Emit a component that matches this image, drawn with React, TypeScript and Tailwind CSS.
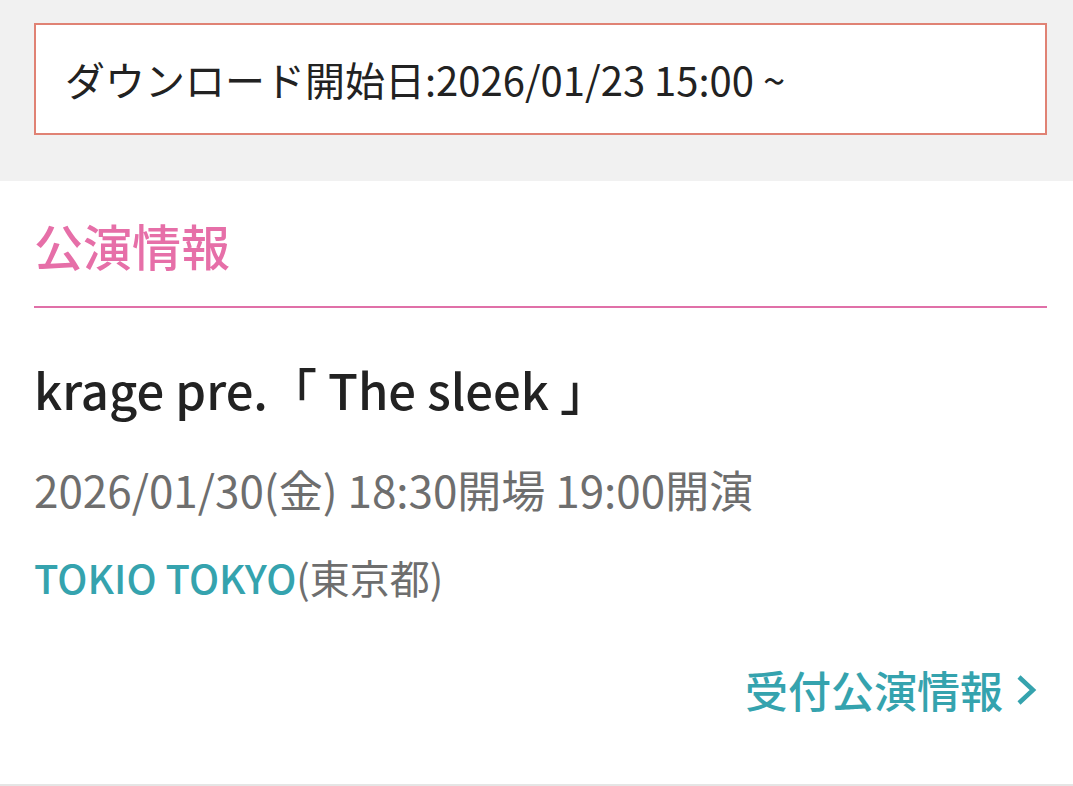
import React from "react";

const font = { fontFamily: '"Noto Sans CJK JP", "Noto Sans", sans-serif' };

export default function App() {
  return (
    <div className="w-[1073px] h-[786px] bg-white overflow-hidden flex flex-col" style={font}>
      {/* Download notice */}
      <div className="bg-[#f1f1f1] pl-[34px] pr-[26px] pt-[23px] pb-[46px]">
        <div className="h-[112px] border-2 border-[#e08274] bg-white flex items-center pl-[29px] text-[40px] leading-none text-[#222]">
          ダウンロード開始日:2026/01/23 15:00 ~
        </div>
      </div>

      {/* Performance info */}
      <div className="flex-1 pl-[34px] pr-[26px] flex flex-col">
        <h2 className="pt-[35px] pb-[31px] text-[49px] leading-[1.2] font-medium text-[#e66fa8] border-b-2 border-[#e070a8]">
          公演情報
        </h2>
        <div className="pt-[52px] text-[49px] leading-[1.2] font-medium text-[#222]">
          krage pre.「 The sleek 」
        </div>
        <div className="pt-[44px] text-[44px] leading-[1.2] text-[#6e6e6e]">
          2026/01/30(金) 18:30開場 19:00開演
        </div>
        <div className="pt-[38px] text-[40px] leading-[1.2] text-[#6e6e6e]">
          <span className="font-medium text-[#35a3ae]">TOKIO TOKYO</span>(東京都)
        </div>
        <div className="pt-[63px] flex justify-end items-center gap-[13px] pr-[9px] text-[43px] leading-[1.2] font-medium text-[#35a3ae]">
          <span>受付公演情報</span>
          <svg width="22" height="32" viewBox="0 0 22 32" fill="none">
            <path d="M3 3 L17 16 L3 29" stroke="#35a3ae" strokeWidth="4.5" />
          </svg>
        </div>
      </div>
      <div className="h-[2px] bg-[#e5e5e5]" />
    </div>
  );
}
